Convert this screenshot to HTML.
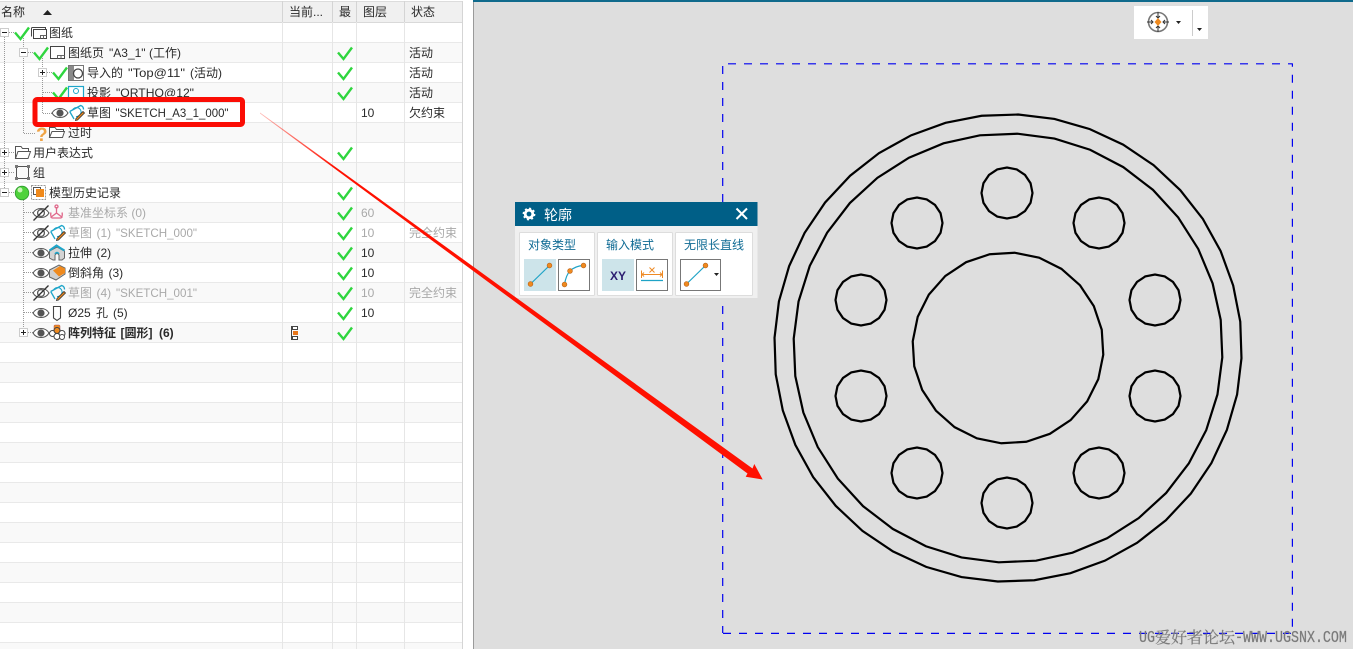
<!DOCTYPE html>
<html><head><meta charset="utf-8"><style>
html,body{margin:0;padding:0;background:#fff;width:1353px;height:649px;overflow:hidden}
svg{display:block;position:absolute;left:0;top:0}
text{font-family:"Liberation Sans","Noto Sans CJK SC",sans-serif;font-size:12px;fill:#2a2a2a}
.g{fill:#a9a9a9}
.t{fill:#0f6b94}
</style></head><body>
<svg width="1353" height="649" viewBox="0 0 1353 649" xmlns="http://www.w3.org/2000/svg">
<defs>
<pattern id="rows" x="0" y="23" width="463" height="40" patternUnits="userSpaceOnUse">
<rect width="463" height="20" fill="#fff"/><rect y="20" width="463" height="20" fill="#f9f9f9"/>
<rect y="19" width="463" height="1" fill="#e9e9e9"/><rect y="39" width="463" height="1" fill="#e9e9e9"/>
</pattern>
<linearGradient id="fade" gradientUnits="userSpaceOnUse" x1="258" y1="112" x2="335" y2="168"><stop offset="0" stop-color="#ff1000" stop-opacity=".25"/><stop offset="1" stop-color="#ff1000"/></linearGradient>
<polyline id="chk" points="0,0 5.500,6.500 14,-5" fill="none" stroke="#2fd53f" stroke-width="2.400"/>
<g id="minus"><rect x="-3.500" y="-3.500" width="8" height="8" fill="#fff" stroke="#ccc"/><path d="M-2 .5H3" stroke="#222"/></g>
<g id="plus"><rect x="-3.500" y="-3.500" width="8" height="8" fill="#fff" stroke="#ccc"/><path d="M-2 .5H3M.5 -2V3" stroke="#222"/></g>
<g id="eye"><path d="M-8 0C-4.500 -6 4.500 -6 8 0C4.500 6 -4.500 6 -8 0Z" fill="#fff" stroke="#555" stroke-width="1.100"/><circle r="3.600" fill="#555"/></g>
<g id="eyex"><path d="M-8 0C-4.500 -6 4.500 -6 8 0C4.500 6 -4.500 6 -8 0Z" fill="#fff" stroke="#555" stroke-width="1.100"/><circle r="3.400" fill="#fff" stroke="#555" stroke-width="1.300"/><path d="M-7.500 7.500L7.500 -7.500" stroke="#333" stroke-width="1.300"/></g>
<g id="sk"><path d="M.7 -1.500L11.700 -7.500C13.500 -7 14.500 -5.500 14.500 -3.500M.7 -1.500L5 6" fill="none" stroke="#1ea5c9" stroke-width="1.300"/><path d="M3.500 -2.800A4.500 4.500 0 1 1 7 3.500" fill="none" stroke="#1ea5c9" stroke-width="1.100"/><path d="M7 5.500L14 -1.500L15.500 0L8.500 7L6.500 7.500Z" fill="#e8871e" stroke="#333" stroke-width=".8"/></g>
<polygon id="p40" points="1000,0 988,156 951,309 891,454 809,588 707,707 588,809 454,891 309,951 156,988 0,1000 -156,988 -309,951 -454,891 -588,809 -707,707 -809,588 -891,454 -951,309 -988,156 -1000,0 -988,-156 -951,-309 -891,-454 -809,-588 -707,-707 -588,-809 -454,-891 -309,-951 -156,-988 0,-1000 156,-988 309,-951 454,-891 588,-809 707,-707 809,-588 891,-454 951,-309 988,-156" fill="none" stroke="#000" stroke-width="2.200" vector-effect="non-scaling-stroke"/>
<polygon id="p36" points="1000,0 985,174 940,342 866,500 766,643 643,766 500,866 342,940 174,985 0,1000 -174,985 -342,940 -500,866 -643,766 -766,643 -866,500 -940,342 -985,174 -1000,0 -985,-174 -940,-342 -866,-500 -766,-643 -643,-766 -500,-866 -342,-940 -174,-985 0,-1000 174,-985 342,-940 500,-866 643,-766 766,-643 866,-500 940,-342 985,-174" fill="none" stroke="#000" stroke-width="2.200" vector-effect="non-scaling-stroke"/>
<polygon id="p24" points="1000,0 966,259 866,500 707,707 500,866 259,966 0,1000 -259,966 -500,866 -707,707 -866,500 -966,259 -1000,0 -966,-259 -866,-500 -707,-707 -500,-866 -259,-966 0,-1000 259,-966 500,-866 707,-707 866,-500 966,-259" fill="none" stroke="#000" stroke-width="2.200" vector-effect="non-scaling-stroke"/>
<polygon id="p16" points="1000,0 924,383 707,707 383,924 0,1000 -383,924 -707,707 -924,383 -1000,0 -924,-383 -707,-707 -383,-924 0,-1000 383,-924 707,-707 924,-383" fill="none" stroke="#000" stroke-width="2.200" vector-effect="non-scaling-stroke"/>
</defs>

<!-- tree panel -->
<rect width="463" height="649" fill="#fff"/>
<rect y="23" width="463" height="626" fill="url(#rows)"/>
<rect x="0" y="1" width="463" height="21" fill="#f0f0f0"/>
<rect x="0" y="22" width="463" height="1" fill="#d9d9d9"/>
<rect x="0" y="1" width="463" height="1" fill="#dcdcdc"/>
<path d="M282.500 1V649M332.500 1V649M356.500 1V649M404.500 1V649" stroke="#e6e6e6"/>
<path d="M282.500 1V22M332.500 1V22M356.500 1V22M404.500 1V22" stroke="#d4d4d4"/>
<rect x="462" y="1" width="1" height="648" fill="#d5d5d5"/>

<text x="1" y="16">名称</text><path d="M43 15L47.500 10L52 15Z" fill="#222"/>
<text x="289" y="16">当前...</text><text x="339" y="16">最</text><text x="363" y="16">图层</text><text x="411" y="16">状态</text>

<!-- connector dots -->
<g stroke="#999" stroke-dasharray="1 1" fill="none">
<path d="M4.500 37V188M9 32.500H15M23.500 38V133.500H36M28 52.500H34M42.500 58V113.500H52M47 72.500H53M43 92.500H53M9 152.500H15M9 172.500H15M9 192.500H15M23.500 198V333M24 212.500H33M24 232.500H33M24 252.500H33M24 272.500H33M24 292.500H33M24 312.500H33M28 332.500H33"/>
</g>

<use href="#minus" x="4" y="32"/><use href="#minus" x="23" y="52"/><use href="#plus" x="42" y="72"/>
<use href="#plus" x="4" y="152"/><use href="#plus" x="4" y="172"/><use href="#minus" x="4" y="192"/><use href="#plus" x="23" y="332"/>

<!-- tree checks -->
<use href="#chk" x="15" y="32.500"/><use href="#chk" x="34" y="52.500"/><use href="#chk" x="53" y="72.500"/><use href="#chk" x="53" y="92.500"/>
<!-- col checks -->
<use href="#chk" x="338" y="52.500"/><use href="#chk" x="338" y="72.500"/><use href="#chk" x="338" y="92.500"/><use href="#chk" x="338" y="152.500"/>
<use href="#chk" x="338" y="192.500"/><use href="#chk" x="338" y="212.500"/><use href="#chk" x="338" y="232.500"/><use href="#chk" x="338" y="252.500"/><use href="#chk" x="338" y="272.500"/><use href="#chk" x="338" y="292.500"/><use href="#chk" x="338" y="312.500"/><use href="#chk" x="338" y="332.500"/>

<!-- icons row 0..8 -->
<g fill="none" stroke="#444">
<path d="M31.500 36.500V28.500Q31.500 27.500 32.500 27.500H45.500V29.500" />
<rect x="33.500" y="29.500" width="13" height="9" fill="#fff"/><path d="M40.500 38.500V35.500H46.500M43.500 35.500V38.500" stroke="#666"/>
<rect x="50.500" y="46.500" width="14" height="12" fill="#fff"/><path d="M57.500 58.500V55.500H64.500M61 55.500V58.500" stroke="#666"/>
<rect x="68.500" y="65.500" width="15" height="15" fill="#fff" stroke="#777"/>
</g>
<rect x="69" y="66" width="5" height="14" fill="#8a8a8a"/><circle cx="78" cy="73.500" r="4.500" fill="#fff" stroke="#444" stroke-width="1.300"/>
<rect x="68.500" y="86.500" width="15" height="12" fill="#fff" stroke="#1ea5c9" stroke-width="1.200"/><circle cx="76" cy="91" r="2.500" fill="none" stroke="#1ea5c9"/><rect x="68" y="97" width="16" height="3" fill="#e8871e"/>
<use href="#eye" x="60" y="113"/>
<use href="#sk" x="69" y="113"/>
<text x="36" y="141" style="font-size:19px;font-weight:bold;fill:#f0a445">?</text>
<path d="M49.500 137.500V127.500H55L56.500 129.500H63.500V131.500M49.500 137.500L52 131.500H64.500L62.500 137.500Z" fill="#fff" stroke="#555"/>
<path d="M15.500 158.500V146.500H21L22.500 148.500H28.500V151.500M15.500 158.500L18 151.500H30.500L28 158.500Z" fill="#fff" stroke="#555"/>
<rect x="16.500" y="166.500" width="12" height="12" fill="none" stroke="#555"/>
<g fill="#777"><rect x="15" y="165" width="3" height="3"/><rect x="27" y="165" width="3" height="3"/><rect x="15" y="177" width="3" height="3"/><rect x="27" y="177" width="3" height="3"/></g>
<circle cx="22" cy="193" r="6.800" fill="#4fd23c" stroke="#2c9a2c" stroke-width=".8"/><circle cx="20" cy="190" r="2.500" fill="#c9f5b8"/>
<rect x="31.500" y="185.500" width="14" height="14" fill="#fff" stroke="#999" stroke-dasharray="2 1"/><rect x="33.500" y="187.500" width="7" height="7" fill="#fff" stroke="#555"/><rect x="36" y="189" width="8" height="8" fill="#f08a1c"/>

<!-- history rows -->
<use href="#eyex" x="41" y="213"/>
<g fill="none" stroke="#e0688a" stroke-width="1.300"><path d="M56.500 207V213L50.500 217.500M56.500 213L62.500 217.500"/><path d="M51 212.500A6 6 0 0 0 52 218H61A6 6 0 0 0 62 212.500"/><circle cx="56.500" cy="206.500" r="1.500"/></g>
<use href="#eyex" x="41" y="233"/><use href="#sk" x="50" y="233"/>
<use href="#eye" x="41" y="253"/>
<path d="M49.500 251V258L53 260H55V255Q57 252 59 255V260H62L64.500 258V251L57 247Z" fill="#d4d4d4" stroke="#666"/><path d="M49.500 250.500Q53 248 56.500 245.500Q60 248 64.500 250.500" fill="none" stroke="#1ea5c9" stroke-width="2"/><path d="M55 254Q57 251 59 254" fill="none" stroke="#1ea5c9" stroke-width="1.500"/>
<use href="#eye" x="41" y="273"/>
<path d="M49.500 270L59 265L65 268V274L56 280L49.500 277Z" fill="#d0d0d0" stroke="#666"/><path d="M53 270.500L60 266L65 268.500V273L59 276.500Z" fill="#ef8a1e"/>
<use href="#eyex" x="41" y="293"/><use href="#sk" x="50" y="293"/>
<use href="#eye" x="41" y="313"/>
<path d="M53.500 306.500H60.500V318L57 320.500L53.500 318Z" fill="#fff" stroke="#444" stroke-width="1.100"/>
<use href="#eye" x="41" y="333"/>
<rect x="54" y="325" width="6" height="6" rx="1" fill="#ef8a1e" stroke="#a55" stroke-width=".5"/>
<g fill="#fff" stroke="#444"><circle cx="52.500" cy="333.500" r="3"/><circle cx="57" cy="330.500" r="3" fill="#ef8a1e"/><circle cx="62" cy="333.500" r="3"/><circle cx="57" cy="336.500" r="3"/><circle cx="62" cy="337" r="2.500"/></g>
<g fill="#fff" stroke="#444"><rect x="292.500" y="326.500" width="5" height="3"/><rect x="292.500" y="336.500" width="5" height="3"/><path d="M291.500 326V340"/><rect x="293" y="331" width="5" height="4" fill="#e8761a" stroke="none"/></g>

<!-- tree text -->
<text x="49" y="37">图纸</text>
<text x="68" y="57">图纸页</text><text x="109" y="57">"A3_1"</text><text x="149" y="57">(工作)</text><text x="409" y="57">活动</text>
<text x="87" y="77">导入的</text><text x="128" y="77" textLength="57" lengthAdjust="spacingAndGlyphs">"Top@11"</text><text x="190" y="77">(活动)</text><text x="409" y="77">活动</text>
<text x="87" y="97">投影</text><text x="116" y="97" textLength="78" lengthAdjust="spacingAndGlyphs">"ORTHO@12"</text><text x="409" y="97">活动</text>
<text x="87" y="117">草图</text><text x="115.500" y="117" textLength="113" lengthAdjust="spacingAndGlyphs">"SKETCH_A3_1_000"</text><text x="361" y="117">10</text><text x="409" y="117">欠约束</text>
<text x="68" y="137">过时</text>
<text x="33" y="157">用户表达式</text>
<text x="33" y="177">组</text>
<text x="49" y="197">模型历史记录</text>
<text x="68" y="217" class="g">基准坐标系 (0)</text><text x="361" y="217" class="g">60</text>
<text x="68" y="237" class="g">草图</text><text x="96.500" y="237" class="g">(1)</text><text x="116" y="237" class="g" textLength="81" lengthAdjust="spacingAndGlyphs">"SKETCH_000"</text><text x="361" y="237" class="g">10</text><text x="409" y="237" class="g">完全约束</text>
<text x="68" y="257">拉伸</text><text x="96.500" y="257">(2)</text><text x="361" y="257">10</text>
<text x="68" y="277">倒斜角</text><text x="108.500" y="277">(3)</text><text x="361" y="277">10</text>
<text x="68" y="297" class="g">草图</text><text x="96.500" y="297" class="g">(4)</text><text x="116" y="297" class="g" textLength="81" lengthAdjust="spacingAndGlyphs">"SKETCH_001"</text><text x="361" y="297" class="g">10</text><text x="409" y="297" class="g">完全约束</text>
<text x="68" y="317">Ø25</text><text x="96" y="317">孔</text><text x="113" y="317">(5)</text><text x="361" y="317">10</text>
<text x="68" y="337" style="font-weight:bold">阵列特征</text><text x="120.500" y="337" style="font-weight:bold">[圆形]</text><text x="159" y="337" style="font-weight:bold">(6)</text>

<!-- graphics window -->
<rect x="473" y="0" width="1" height="649" fill="#9a9a9a"/>
<rect x="474" y="0" width="879" height="649" fill="#dedede"/>
<rect x="473" y="0" width="880" height="2" fill="#0f6a8c"/>

<!-- top toolbar -->
<rect x="1134" y="6" width="74" height="33" fill="#fff"/>
<circle cx="1158" cy="22" r="9.500" fill="none" stroke="#777" stroke-width="1.600"/>
<path d="M1158 12V18M1156 16L1158 18L1160 16M1158 32V26M1156 28L1158 26L1160 28M1147 22H1153M1151 20L1153 22L1151 24M1169 22H1163M1165 20L1163 22L1165 24" fill="none" stroke="#333" stroke-width="1"/>
<path d="M1158 18L1161.500 22L1158 26L1154.500 22Z" fill="#ef8a1e"/>
<path d="M1176 21H1181L1178.500 24Z" fill="#222"/>
<rect x="1192" y="10" width="1" height="26" fill="#ccc"/>
<path d="M1197 28H1202L1199.500 31Z" fill="#222"/>

<!-- drawing sheet -->
<g stroke="#0000f0" stroke-width="1.200" fill="none">
<line x1="723" y1="63.800" x2="1292.600" y2="63.800" stroke-dasharray="8 8" stroke-dashoffset="11"/>
<line x1="1292.400" y1="63.500" x2="1292.400" y2="633" stroke-dasharray="8 8" stroke-dashoffset="4.800"/>
<line x1="723" y1="633.400" x2="1292" y2="633.400" stroke-dasharray="8 8"/>
<line x1="722.700" y1="64" x2="722.700" y2="633" stroke-dasharray="8 8" stroke-dashoffset="14"/>
</g>

<!-- part -->
<use href="#p40" transform="translate(1008 348) rotate(2.500) scale(.2337)"/>
<use href="#p36" transform="translate(1008 348) rotate(2.500) scale(.2145)"/>
<use href="#p24" transform="translate(1008 348) rotate(4) scale(.0955)"/>
<use href="#p16" transform="translate(1007 193) scale(.0255)"/>
<use href="#p16" transform="translate(1099 223) scale(.0255)"/>
<use href="#p16" transform="translate(1155 300) scale(.0255)"/>
<use href="#p16" transform="translate(1155 396) scale(.0255)"/>
<use href="#p16" transform="translate(1099 473) scale(.0255)"/>
<use href="#p16" transform="translate(1007 503) scale(.0255)"/>
<use href="#p16" transform="translate(917 473) scale(.0255)"/>
<use href="#p16" transform="translate(861 396) scale(.0255)"/>
<use href="#p16" transform="translate(861 300) scale(.0255)"/>
<use href="#p16" transform="translate(917 223) scale(.0255)"/>

<!-- dialog -->
<rect x="515" y="202" width="242.500" height="96" fill="#f0f0f0"/>
<rect x="515" y="202" width="242.500" height="24" fill="#005f87"/>
<circle cx="529" cy="214" r="3.800" fill="none" stroke="#fff" stroke-width="2.800"/><circle cx="529" cy="214" r="5.500" fill="none" stroke="#fff" stroke-width="1.800" stroke-dasharray="2 2.300"/>
<text x="544" y="220" style="fill:#fff;font-size:14px">轮廓</text>
<path d="M736.500 208.500L747 219M747 208.500L736.500 219" stroke="#fff" stroke-width="2"/>
<g fill="#fff" stroke="#ddd"><rect x="519.500" y="232.500" width="75" height="63" rx="1"/><rect x="597.500" y="232.500" width="75" height="63" rx="1"/><rect x="675.500" y="232.500" width="77" height="63" rx="1"/></g>
<text x="528" y="249" class="t">对象类型</text><text x="606" y="249" class="t">输入模式</text><text x="684" y="249" class="t">无限长直线</text>
<rect x="524" y="259" width="32" height="32" fill="#cde4ea"/>
<rect x="558.500" y="259.500" width="31" height="31" fill="#fff" stroke="#777"/>
<rect x="602" y="259" width="32" height="32" fill="#cde4ea"/>
<rect x="636.500" y="259.500" width="31" height="31" fill="#fff" stroke="#777"/>
<rect x="680.500" y="259.500" width="40" height="31" fill="#fff" stroke="#777"/>
<g stroke="#1fa3c6" stroke-width="1.200" fill="none"><path d="M530.500 284L549.500 265.500"/><path d="M564.500 284.500Q566 275 570 271Q575 266 583.500 265.500"/><path d="M686.500 284L705.500 265.500"/><path d="M641 280.500H663" stroke-width="1.300"/></g>
<g fill="#ef8a1e" stroke="#b8611a" stroke-width=".6"><circle cx="530.500" cy="284" r="2.400"/><circle cx="549.500" cy="265.500" r="2.400"/><circle cx="564.500" cy="284.500" r="2.400"/><circle cx="570" cy="271" r="2.400"/><circle cx="583.500" cy="265.500" r="2.400"/><circle cx="686.500" cy="284" r="2.400"/><circle cx="705.500" cy="265.500" r="2.400"/></g>
<text x="610" y="280" style="font-weight:bold;font-size:12px;fill:#2b1d70">XY</text>
<path d="M641.500 270.500V278M662.500 270.500V278M642 274.500H662M644 272.500L642 274.500L644 276.500M660 272.500L662 274.500L660 276.500M649.500 267.500L654.500 272.500M654.500 267.500L649.500 272.500" fill="none" stroke="#ee8a24" stroke-width="1"/>
<path d="M714 273H719L716.500 276Z" fill="#222"/>

<!-- red annotations -->
<rect x="35" y="99.500" width="207.500" height="25" rx="2" fill="none" stroke="#fb0d05" stroke-width="5"/>
<path d="M260 112.500L752.500 468.500L754.300 464L762.700 479.500L745.700 476.700L747.500 473.500L260 113.500Z" fill="url(#fade)"/>

<!-- watermark -->
<text transform="translate(1139 642) scale(1 1.250)" style="font-family:'Liberation Mono',monospace;font-size:13.330px;fill:#777" stroke="#8a8a8a" stroke-width=".25">UG</text>
<text x="1155" y="643" style="font-family:'Noto Serif CJK SC',serif;font-size:16px;fill:#777" stroke="#8a8a8a" stroke-width=".25">爱好者论坛</text>
<text transform="translate(1235 642) scale(1 1.250)" style="font-family:'Liberation Mono',monospace;font-size:13.330px;fill:#777" stroke="#8a8a8a" stroke-width=".25">-WWW.UGSNX.COM</text>
</svg>
</body></html>
